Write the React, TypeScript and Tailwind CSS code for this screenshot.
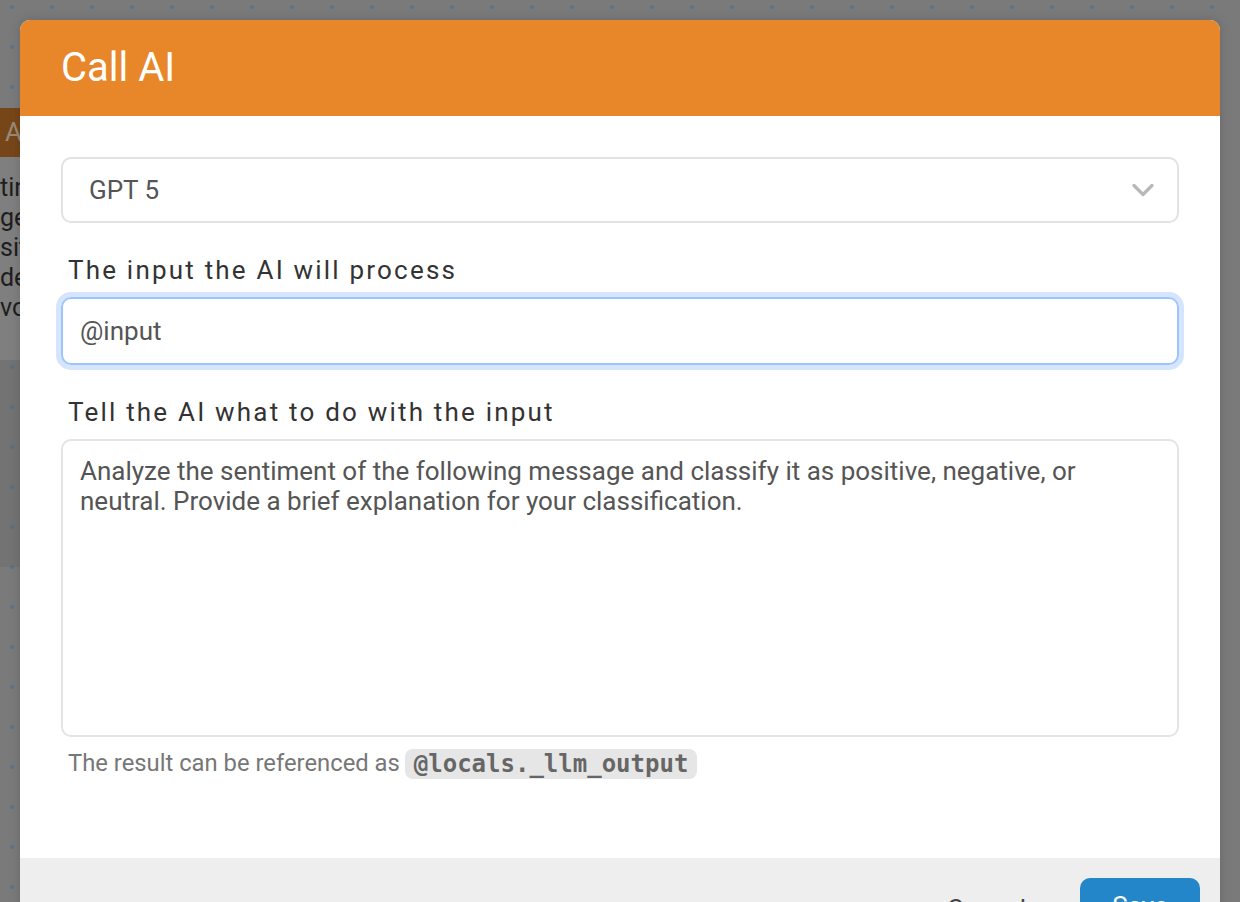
import { ChevronDown } from "lucide-react";

const sans = "font-['Roboto','Liberation_Sans',sans-serif]";

function CanvasBehind() {
    return (
        <>
            <div className="absolute left-0 top-[360px] w-[40px] h-[207px] bg-[#000]/5" />
            <div className="absolute left-[-176px] top-[108px] w-[220px] h-[252px] bg-[#7f7f7f]">
                <div className="h-[49px] bg-[#774618] flex items-center px-[181px] text-[26px] text-[#9a8a7a]">A</div>
                <div className="pt-[16px] pl-[176px] text-[25px] leading-[30px] text-[#1e1e1e] whitespace-nowrap">
                    <div>tin</div>
                    <div>ge</div>
                    <div>sit</div>
                    <div>de</div>
                    <div>vo</div>
                </div>
            </div>
        </>
    )
}

export default function App() {
    return (
        <div className={`relative w-full h-[902px] overflow-hidden bg-[#7a7a7a] bg-[radial-gradient(circle,#627484_1.8px,transparent_2.2px)] bg-[size:40px_40px] bg-[position:-8px_-13px] ${sans}`}>
            <CanvasBehind />
            <div className="absolute left-[20px] top-[20px] w-[1200px] rounded-t-[10px] overflow-hidden bg-white shadow-[0_0_12px_rgba(0,0,0,0.15)]">
                <div className="h-[96px] bg-[#e7872a] flex items-center px-[41px]">
                    <h2 className="text-[40px] text-white leading-none">Call AI</h2>
                </div>
                <div className="px-[41px] pt-[41px] pb-[79px] flex flex-col">
                    <div className="h-[66px] rounded-[10px] border-2 border-[#e2e2e2] flex items-center justify-between pl-[26px] pr-[16px]">
                        <span className="text-[26px] text-[#555]">GPT 5</span>
                        <ChevronDown className="text-[#b8b8b8]" size={36} strokeWidth={2.2} />
                    </div>
                    <label className="mt-[30px] px-[7px] text-[26px] leading-[34px] tracking-[2.2px] text-[#333]">The input the AI will process</label>
                    <input
                        readOnly
                        value="@input"
                        className="mt-[10px] h-[68px] rounded-[10px] border-2 border-[#9ec5fb] ring-[5px] ring-[#d5e5fd] outline-none px-[17px] text-[26px] text-[#555]"
                    />
                    <label className="mt-[30px] px-[7px] text-[26px] leading-[34px] tracking-[2.2px] text-[#333]">Tell the AI what to do with the input</label>
                    <textarea
                        readOnly
                        defaultValue="Analyze the sentiment of the following message and classify it as positive, negative, or neutral. Provide a brief explanation for your classification."
                        className="mt-[10px] h-[298px] resize-none rounded-[10px] border-2 border-[#e4e4e4] outline-none px-[17px] py-[15px] text-[26px] leading-[30px] text-[#555]"
                    />
                    <div className="mt-[12px] px-[7px] h-[30px] flex items-center text-[23.8px] text-[#777]">
                        The result can be referenced as
                        <code className="ml-[5px] px-[9px] h-[30px] flex items-center rounded-[8px] bg-[#e6e6e6] font-['DejaVu_Sans_Mono',monospace] font-bold text-[24px] text-[#666]">@locals._llm_output</code>
                    </div>
                </div>
                <div className="bg-[#eeeeee] h-[80px] flex justify-end items-start pt-[20px] pr-[20px] gap-[54px]">
                    <button className="mt-[12px] text-[26px] text-[#444]">Cancel</button>
                    <button className="h-[52px] w-[120px] rounded-[10px] bg-[#2386c8] text-white text-[26px] pt-[4px]">Save</button>
                </div>
            </div>
        </div>
    )
}
